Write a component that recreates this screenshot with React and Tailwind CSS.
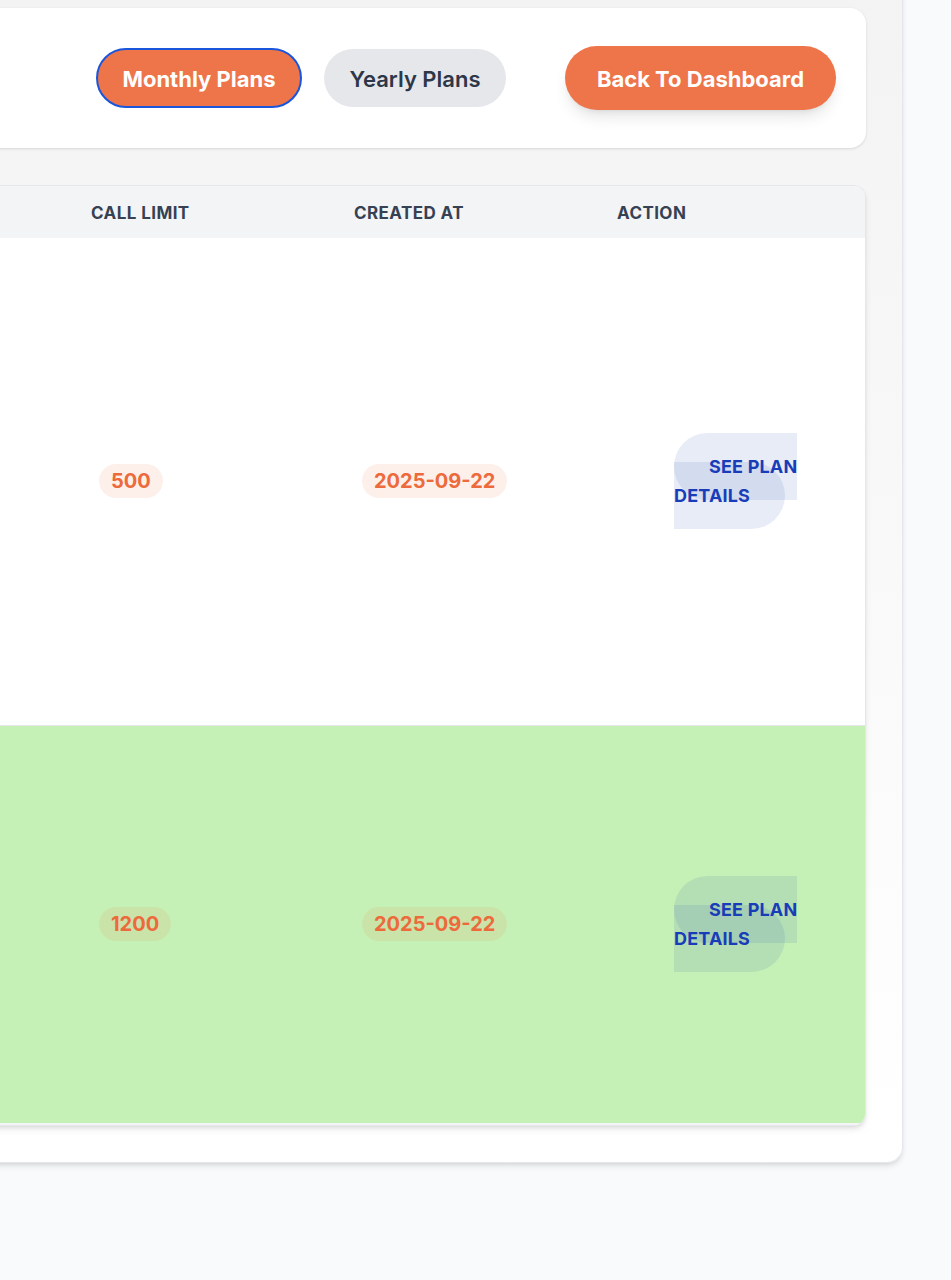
import React from "react";

const plans = [
    { callLimit: 500, createdAt: "2025-09-22", height: "h-[487px]", highlight: false },
    { callLimit: 1200, createdAt: "2025-09-22", height: "h-[399px]", highlight: true },
];

function Pill({ children }) {
    return (
        <span className="inline-flex h-[34px] items-center rounded-full bg-[#ee6c3f]/10 px-3 text-[20px] font-bold text-[#ec6a3b]">
            {children}
        </span>
    );
}

export default function App() {
    return (
        <div className="min-h-[1280px] overflow-hidden bg-gray-50 font-['Inter',sans-serif]">
            <div className="-ml-[60px] -mt-[28px] w-[963px] rounded-br-2xl border-r border-b border-gray-200 bg-gradient-to-b from-[#f3f3f4] to-white p-9 shadow-md">
                <div className="flex h-[140px] items-center justify-end gap-[22px] rounded-2xl bg-white pr-[30px] shadow-[0_1px_3px_rgba(0,0,0,0.12)]">
                    <button className="h-[60px] w-[206px] rounded-full border-2 border-[#1a56db] bg-[#ee7449] pt-0.5 text-[22px] font-bold text-white">
                        Monthly Plans
                    </button>
                    <button className="h-[58px] w-[182px] rounded-full bg-gray-200 pt-0.5 text-[22px] font-semibold text-[#2d3748]">
                        Yearly Plans
                    </button>
                    <button className="ml-[37px] h-[64px] w-[271px] rounded-full bg-[#ee7449] pt-0.5 text-[22px] font-bold text-white shadow-lg">
                        Back To Dashboard
                    </button>
                </div>

                <div className="mt-[37px] overflow-hidden rounded-xl border border-gray-200 bg-white shadow-md">
                    <table className="w-full table-fixed border-collapse">
                        <colgroup>
                            <col className="w-[88px]" />
                            <col className="w-[263px]" />
                            <col className="w-[263px]" />
                            <col />
                        </colgroup>
                        <thead className="bg-gray-100">
                            <tr className="h-[52px]">
                                <th />
                                <th className="pl-[26px] pt-1 text-left text-[17px] font-bold uppercase tracking-wide text-gray-700">Call Limit</th>
                                <th className="pl-[26px] pt-1 text-left text-[17px] font-bold uppercase tracking-wide text-gray-700">Created At</th>
                                <th className="pl-[26px] pt-1 text-left text-[17px] font-bold uppercase tracking-wide text-gray-700">Action</th>
                            </tr>
                        </thead>
                        <tbody>
                            {plans.map((plan, i) => (
                                <tr
                                    key={i}
                                    className={`${plan.height} ${plan.highlight ? "bg-[#c6f1b6] border-b-2 border-gray-100" : "bg-white border-b border-gray-200"}`}
                                >
                                    <td />
                                    <td className="pl-[34px] align-middle">
                                        <Pill>{plan.callLimit}</Pill>
                                    </td>
                                    <td className="pl-[34px] align-middle">
                                        <Pill>{plan.createdAt}</Pill>
                                    </td>
                                    <td className="pl-[83px] pr-[40px] align-middle text-[18px] leading-[29px]">
                                        <a
                                            href="#"
                                            className="rounded-full bg-[#1e40af]/10 px-[35px] py-[23px] font-bold uppercase tracking-[0.01em] text-blue-800"
                                        >
                                            See Plan Details
                                        </a>
                                    </td>
                                </tr>
                            ))}
                        </tbody>
                    </table>
                </div>
            </div>
        </div>
    );
}
